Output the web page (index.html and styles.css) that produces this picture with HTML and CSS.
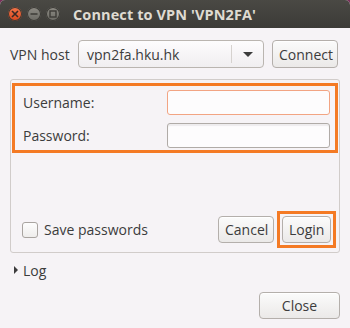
FILE: index.html
```html
<!DOCTYPE html>
<html>
<head>
<meta charset="utf-8">
<link rel="stylesheet" href="styles.css">
</head>
<body>
<div class="window">
  <div class="titlebar">
    <div class="wbtns">
      <span class="wbtn close"><svg width="8" height="8" viewBox="0 0 8 8"><path d="M1 1L7 7M7 1L1 7" stroke="#3a2a25" stroke-width="1.6"/></svg></span>
      <span class="wbtn"><svg width="8" height="8" viewBox="0 0 8 8"><path d="M0.5 4H7.5" stroke="#3c3b37" stroke-width="1.6"/></svg></span>
      <span class="wbtn"><svg width="8" height="8" viewBox="0 0 8 8"><rect x="1" y="1" width="6" height="6" fill="none" stroke="#3c3b37" stroke-width="1.4"/></svg></span>
    </div>
    <div class="title">Connect to VPN 'VPN2FA'</div>
  </div>
  <div class="content">
    <div class="hostrow">
      <span class="label">VPN host</span>
      <div class="combo"><span class="combotext">vpn2fa.hku.hk</span><span class="sep"></span><span class="arrow"></span></div>
      <button class="btn connect">Connect</button>
    </div>
    <div class="frame">
      <div class="hl creds">
        <div class="field"><span class="label">Username:</span><span class="entry focus"></span></div>
        <div class="field"><span class="label">Password:</span><span class="entry"></span></div>
      </div>
      <div class="actions">
        <label class="check"><span class="box"></span><span class="label">Save passwords</span></label>
        <div class="btns">
          <button class="btn cancel">Cancel</button>
          <div class="hl loginwrap"><button class="btn login">Login</button></div>
        </div>
      </div>
    </div>
    <div class="log"><span class="tri"></span><span class="label">Log</span></div>
    <div class="footer"><button class="btn closebtn">Close</button></div>
  </div>
</div>
</body>
</html>
```
FILE: styles.css
```css
*, *::before, *::after { box-sizing: border-box; }
html, body { margin: 0; padding: 0; }
body {
  width: 350px; height: 328px; overflow: hidden;
  background: #7a2f5a;
  font-family: "Open Sans", "DejaVu Sans", sans-serif;
  font-size: 14px;
  color: #3c3c3c;
}
.window {
  width: 350px; height: 328px;
  background: #f6f3f6;
  border-radius: 5px 5px 0 0;
  overflow: hidden;
  display: flex; flex-direction: column;
}
.titlebar {
  height: 28px; flex: none;
  background: linear-gradient(#4a4944, #3c3b37);
  display: flex; align-items: center;
}
.wbtns { display: flex; gap: 5px; padding-left: 8px; }
.wbtn {
  width: 14px; height: 14px; border-radius: 50%;
  background: linear-gradient(#8d8b84, #6b6a64);
  display: flex; align-items: center; justify-content: center;
  box-shadow: inset 0 0 0 1px #3a3935;
}
.wbtn.close { background: linear-gradient(#f3764a, #d9471d); }
.title {
  margin-left: 13px;
  color: #dfdbd2;
  font-weight: bold;
  font-size: 14.5px;
  letter-spacing: 0.1px;
}
.content {
  flex: 1;
  padding: 12px 10px 9px 10px;
  display: flex; flex-direction: column;
}
.hostrow { display: flex; align-items: center; height: 28px; flex: none; }
.hostrow .label { width: 68px; }
.combo {
  width: 186px; height: 28px;
  border: 1px solid #bab5b0; border-radius: 4px;
  background: linear-gradient(#fdfcfd, #f0eef0);
  display: flex; align-items: center;
}
.combotext { flex: 1; padding-left: 8px; }
.sep { width: 1px; height: 18px; background: #d6d2cf; }
.arrow {
  width: 0; height: 0; margin: 0 10px 0 11px;
  border-left: 5px solid transparent; border-right: 5px solid transparent;
  border-top: 5px solid #3c3c3c;
}
.btn {
  font: inherit; color: inherit;
  height: 28px;
  border: 1px solid #b4afab; border-radius: 4px;
  background: linear-gradient(#fbfbfb, #ebe9e8);
  padding: 0 6px;
  box-shadow: inset 0 1px 0 #ffffff;
}
.connect { margin-left: 8px; width: 66px; }
.frame {
  margin-top: 11px;
  height: 174px; flex: none;
  border: 1px solid #d1ccca; border-radius: 3px;
  display: flex; flex-direction: column; justify-content: space-between;
  padding: 3px 1px 4px 1px;
}
.hl { border: 3px solid #f47a24; }
.creds {
  height: 70px;
  padding: 4px 5px 0 6px;
  display: flex; flex-direction: column; gap: 8px;
}
.field { display: flex; align-items: center; justify-content: space-between; height: 25px; }
.field .label { padding-left: 2px; }
.entry {
  width: 163px; height: 25px;
  border: 1px solid #b0aba7; border-radius: 3px;
  background: #fdfcfd;
  box-shadow: inset 0 2px 1px #eeecee;
}
.entry.focus { border-color: #f2a483; box-shadow: none; }
.actions { display: flex; align-items: center; justify-content: space-between; padding-left: 10px; }
.check { display: flex; align-items: center; gap: 6px; }
.box {
  width: 16px; height: 16px;
  border: 1px solid #a9a4a0; border-radius: 3px;
  background: linear-gradient(#fdfdfd, #efedec);
}
.btns { display: flex; align-items: center; gap: 3px; padding-right: 2px; }
.cancel { width: 56px; height: 27px; }
.loginwrap { padding: 2px; }
.login { width: 49px; height: 27px; }
.log { display: flex; align-items: center; margin-top: 9px; padding-left: 4px; height: 16px; flex: none; }
.tri {
  width: 0; height: 0;
  border-top: 4px solid transparent; border-bottom: 4px solid transparent;
  border-left: 4px solid #3c3c3c;
  margin-right: 5px;
}
.footer { flex: 1; display: flex; justify-content: flex-end; align-items: flex-end; }
.closebtn { width: 81px; height: 27px; }
```
